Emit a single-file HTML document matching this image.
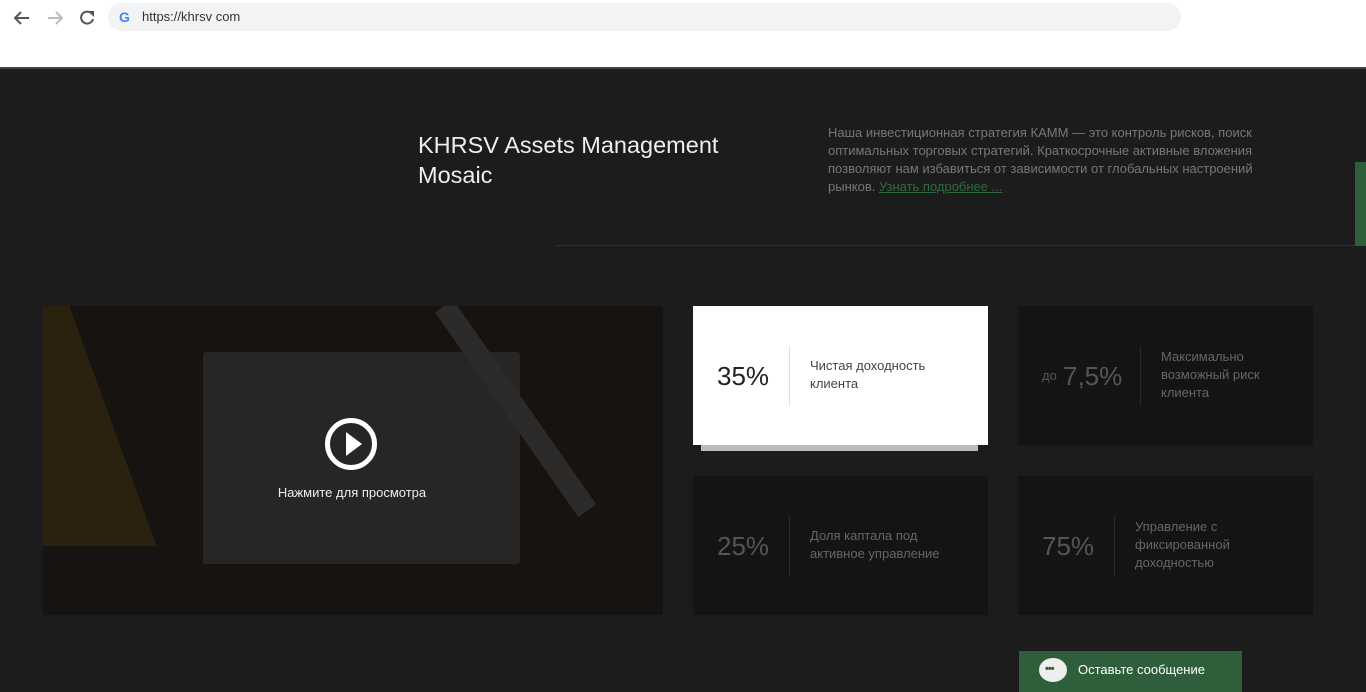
<!DOCTYPE html>
<html><head><meta charset="utf-8"><style>
*{margin:0;padding:0;box-sizing:border-box}
body{width:1366px;height:692px;overflow:hidden;background:#1c1c1c;font-family:"Liberation Sans",sans-serif;position:relative}
.abs{position:absolute}
.card{position:absolute;background:#141414;width:295px;height:139px}
.num{position:absolute;font-size:26px;color:#555}
.sep{position:absolute;width:1px;height:60px;background:#2a2a2a}
.lbl{position:absolute;font-size:13px;line-height:18px;color:#666}
</style></head><body>
<div class="abs" style="left:0;top:0;width:1366px;height:67px;background:#fff"></div>
<div class="abs" style="left:0;top:67px;width:1366px;height:2px;background:#444"></div>
<svg class="abs" style="left:12px;top:8px" width="85" height="20" viewBox="0 0 85 20">
<path d="M17 10H4M9 4L3 10l6 6" stroke="#555" stroke-width="2" fill="none"/>
<path d="M36 10h13M44 4l6 6-6 6" stroke="#bbb" stroke-width="2" fill="none"/>
<path d="M80 6a6 6 0 1 0 1 5" stroke="#555" stroke-width="2" fill="none"/><path d="M76 3h6v6z" fill="#555"/>
</svg>
<div class="abs" style="left:108px;top:3px;width:1073px;height:28px;border-radius:14px;background:#f1f3f4"></div>
<div class="abs" style="left:119px;top:9px;font-size:14px;font-weight:bold;color:#4285f4">G</div>
<div class="abs" style="left:142px;top:9px;font-size:13px;color:#333">https://khrsv com</div>

<div class="abs" style="left:418px;top:130px;font-size:23.5px;line-height:30px;color:#eee">KHRSV Assets Management<br>Mosaic</div>
<div class="abs" style="left:828px;top:124px;width:470px;font-size:13px;line-height:18px;color:#777">Наша инвестиционная стратегия КАММ — это контроль рисков, поиск оптимальных торговых стратегий. Краткосрочные активные вложения позволяют нам избавиться от зависимости от глобальных настроений рынков. <span style="color:#2f6b3e;text-decoration:underline">Узнать подробнее ...</span></div>
<div class="abs" style="left:556px;top:245px;width:800px;height:1px;background:#2e2e2e"></div>
<div class="abs" style="left:1355px;top:162px;width:11px;height:84px;background:#2e5e3a"></div>

<div class="abs" style="left:43px;top:306px;width:620px;height:309px;background:#161311;overflow:hidden">
<div class="abs" style="left:160px;top:46px;width:317px;height:212px;background:#282624;border-radius:3px"></div>
<div class="abs" style="left:-60px;top:0;width:130px;height:240px;background:#2a220e;transform:skewX(20deg)"></div>
<div class="abs" style="left:390px;top:0;width:22px;height:250px;background:#2c2b2a;transform:rotate(-35deg);transform-origin:top"></div>
<div class="abs" style="left:282px;top:112px;width:52px;height:52px;border:5px solid #fff;border-radius:50%"></div>
<svg class="abs" style="left:282px;top:112px" width="52" height="52"><path d="M21 14L37 26 21 38z" fill="#fff"/></svg>
<div class="abs" style="left:-1px;top:179px;width:620px;text-align:center;font-size:13px;color:#eee">Нажмите для просмотра</div>
</div>

<div class="abs" style="left:701px;top:440px;width:277px;height:11px;background:#bbb"></div>
<div class="abs" style="left:693px;top:306px;width:295px;height:139px;background:#fff"></div>
<div class="num" style="left:717px;top:361px;color:#222">35%</div>
<div class="sep" style="left:789px;top:346px;background:#ddd"></div>
<div class="lbl" style="left:810px;top:357px;color:#444">Чистая доходность<br>клиента</div>

<div class="card" style="left:1018px;top:306px"></div>
<div class="abs" style="left:1042px;top:368px;font-size:13px;color:#555">до</div>
<div class="num" style="left:1063px;top:361px">7,5%</div>
<div class="sep" style="left:1140px;top:346px"></div>
<div class="lbl" style="left:1161px;top:348px">Максимально<br>возможный риск<br>клиента</div>

<div class="card" style="left:693px;top:476px"></div>
<div class="num" style="left:717px;top:531px">25%</div>
<div class="sep" style="left:789px;top:516px"></div>
<div class="lbl" style="left:810px;top:527px">Доля каптала под<br>активное управление</div>

<div class="card" style="left:1018px;top:476px"></div>
<div class="num" style="left:1042px;top:531px">75%</div>
<div class="sep" style="left:1114px;top:516px"></div>
<div class="lbl" style="left:1135px;top:518px">Управление с<br>фиксированной<br>доходностью</div>

<div class="abs" style="left:1019px;top:651px;width:223px;height:41px;background:#2e5e3a"></div>
<div class="abs" style="left:1039px;top:658px;width:28px;height:24px;border-radius:50%;background:#eee"></div>
<div class="abs" style="left:1045px;top:663px;font-size:11px;font-weight:bold;color:#2e5e3a;letter-spacing:-1px">•••</div>
<div class="abs" style="left:1078px;top:662px;font-size:13px;color:#fff">Оставьте сообщение</div>
</body></html>
